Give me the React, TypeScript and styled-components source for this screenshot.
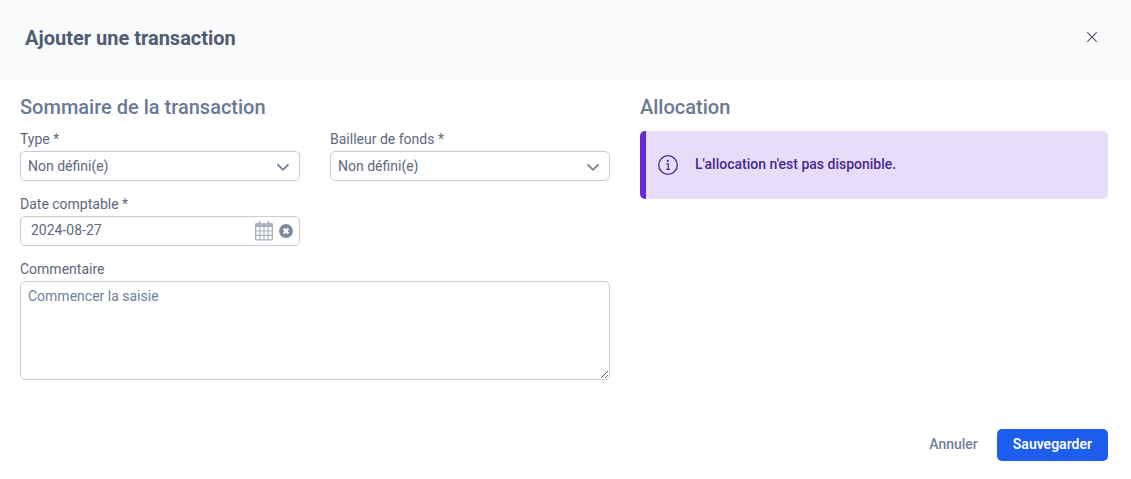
import React, { useState } from "react";
import styled, { createGlobalStyle, css } from "styled-components";

const color = {
  title: "#505d70",
  heading: "#6a7a92",
  text: "#5c697d",
  muted: "#71809a",
  border: "#cbccdb",
  band: "#f9fafc",
  primary: "#1d5eef",
  accent: "#6a29d9",
  accentSoft: "#e7ddf8",
  accentText: "#4a2892",
};

const GlobalStyle = createGlobalStyle`
  *, *::before, *::after { box-sizing: border-box; }
  body {
    margin: 0;
    background: #fff;
    color: ${color.text};
    font: 400 14px/20px Roboto, "Liberation Sans", sans-serif;
  }
  button, input, select, textarea { font: inherit; color: inherit; }
`;

const Dialog = styled.form`
  display: flex;
  flex-direction: column;
`;

const Header = styled.header`
  display: flex;
  align-items: center;
  justify-content: space-between;
  height: 80px;
  padding: 0 28px 4px 25px;
  background: ${color.band};
`;

const Title = styled.h1`
  margin: 0;
  font-size: 20px;
  line-height: 24px;
  font-weight: 700;
  color: ${color.title};
`;

const IconButton = styled.button`
  display: flex;
  align-items: center;
  justify-content: center;
  flex: none;
  padding: 0;
  border: 0;
  background: none;
  cursor: pointer;
`;

const CloseButton = styled(IconButton)`
  width: 22px;
  height: 24px;
  padding-bottom: 2px;
  color: #50535c;
`;

const Body = styled.div`
  display: grid;
  grid-template-columns: 295fr 234fr;
  gap: 30px;
  align-items: start;
  padding: 15px 23px 0 20px;
`;

const Section = styled.section`
  min-width: 0;
`;

const SectionTitle = styled.h2`
  margin: 0;
  font-size: 20px;
  line-height: 24px;
  font-weight: 500;
  color: ${color.heading};
`;

const Fields = styled.div`
  display: grid;
  grid-template-columns: 1fr 1fr;
  gap: 13px 30px;
  margin-top: 10px;
`;

const Field = styled.div<{ $wide?: boolean }>`
  display: flex;
  flex-direction: column;
  gap: 2px;
  min-width: 0;
  ${(p) => p.$wide && "grid-column: 1 / -1;"}
`;

const FirstColumnField = styled(Field)`
  grid-column: 1;
`;

const Label = styled.label`
  line-height: 20px;
`;

const controlFrame = css`
  border: 1px solid ${color.border};
  border-radius: 5px;
  background: #fff;
`;

const SelectBox = styled.div`
  position: relative;
  display: flex;
`;

const Select = styled.select`
  ${controlFrame}
  appearance: none;
  width: 100%;
  height: 30px;
  padding: 0 30px 0 7px;
`;

const Chevron = styled.svg`
  position: absolute;
  right: 10px;
  top: 12px;
  color: ${color.muted};
  pointer-events: none;
`;

const DateBox = styled.div`
  ${controlFrame}
  display: flex;
  align-items: center;
  gap: 6px;
  height: 30px;
  padding: 0 6px 0 10px;
`;

const DateInput = styled.input`
  flex: 1;
  min-width: 0;
  height: 28px;
  padding: 0 0 2px;
  border: 0;
  background: none;
`;

const Comment = styled.textarea`
  ${controlFrame}
  display: block;
  width: 100%;
  height: 99px;
  padding: 4px 7px;
  resize: vertical;
  &::placeholder {
    color: ${color.muted};
    opacity: 1;
  }
`;

const Notice = styled.div`
  display: flex;
  align-items: center;
  gap: 17px;
  min-height: 68px;
  margin-top: 12px;
  padding: 0 12px;
  border-left: 6px solid ${color.accent};
  border-radius: 5px;
  background: ${color.accentSoft};
  color: ${color.accentText};
  font-weight: 500;
`;

const NoticeText = styled.p`
  margin: 0;
  padding-bottom: 2px;
`;

const Footer = styled.footer`
  display: flex;
  justify-content: flex-end;
  gap: 3px;
  padding: 49px 23px 18px;
`;

const Button = styled.button<{ $primary?: boolean }>`
  height: 32px;
  padding: 0 16px 2px;
  border: 0;
  border-radius: 5px;
  background: ${(p) => (p.$primary ? color.primary : "transparent")};
  color: ${(p) => (p.$primary ? "#fff" : color.muted)};
  font-weight: ${(p) => (p.$primary ? 600 : 500)};
  cursor: pointer;
`;

const CloseIcon = () => (
  <svg width="10" height="10" viewBox="0 0 10 10" fill="none" stroke="currentColor" strokeWidth="1.1" aria-hidden="true">
    <path d="M0.2 0.2L9.8 9.8M9.8 0.2L0.2 9.8" />
  </svg>
);

const CalendarIcon = () => (
  <svg width="18" height="20" viewBox="0 0 18 20" fill="none" stroke="#a8b1bb" aria-hidden="true">
    <rect x="0.600" y="2.600" width="16.800" height="16.200" rx="1.200" strokeWidth="1.300" />
    <path d="M0.500 4.200h17" strokeWidth="3.600" />
    <path d="M4.500 0v4M13.500 0v4" strokeWidth="1.800" />
    <path d="M5 6v13M9 6v13M13 6v13M1 10h16M1 14.300h16" strokeWidth="1.200" />
  </svg>
);

const ClearIcon = () => (
  <svg width="14" height="14" viewBox="0 0 14 14" aria-hidden="true">
    <circle cx="7" cy="7" r="6.900" fill="#7b8a9f" />
    <path d="M4.600 4.600l4.800 4.800M9.400 4.600L4.600 9.400" stroke="#fff" strokeWidth="2.200" />
  </svg>
);

const InfoIcon = () => (
  <svg width="20" height="20" viewBox="0 0 20 20" fill="none" stroke="currentColor" aria-hidden="true">
    <circle cx="10" cy="10" r="9.300" strokeWidth="1.300" />
    <circle cx="9.800" cy="5.900" r="1.100" fill="currentColor" stroke="none" />
    <path d="M8.300 8.900h1.900v5.300M8.200 14.300h3.800" strokeWidth="1.200" />
  </svg>
);

function SelectField({ id, label }: { id: string; label: string }) {
  return (
    <Field>
      <Label htmlFor={id}>{label} *</Label>
      <SelectBox>
        <Select id={id} required>
          <option>Non défini(e)</option>
        </Select>
        <Chevron width="14" height="9" viewBox="0 0 14 9" fill="none" stroke="currentColor" strokeWidth="1.800" aria-hidden="true">
          <path d="M1.500 1.300L7 6.800l5.500-5.500" />
        </Chevron>
      </SelectBox>
    </Field>
  );
}

export default function App() {
  const [date, setDate] = useState("2024-08-27");

  return (
    <>
      <GlobalStyle />
      <Dialog onSubmit={(e) => e.preventDefault()}>
        <Header>
          <Title>Ajouter une transaction</Title>
          <CloseButton type="button" aria-label="Fermer">
            <CloseIcon />
          </CloseButton>
        </Header>
        <Body>
          <Section>
            <SectionTitle>Sommaire de la transaction</SectionTitle>
            <Fields>
              <SelectField id="type" label="Type" />
              <SelectField id="funder" label="Bailleur de fonds" />
              <FirstColumnField>
                <Label htmlFor="date">Date comptable *</Label>
                <DateBox>
                  <DateInput id="date" type="text" value={date} onChange={(e) => setDate(e.target.value)} />
                  <IconButton type="button" aria-label="Choisir une date">
                    <CalendarIcon />
                  </IconButton>
                  <IconButton type="button" aria-label="Effacer la date" onClick={() => setDate("")}>
                    <ClearIcon />
                  </IconButton>
                </DateBox>
              </FirstColumnField>
              <Field $wide>
                <Label htmlFor="comment">Commentaire</Label>
                <Comment id="comment" placeholder="Commencer la saisie" />
              </Field>
            </Fields>
          </Section>
          <Section>
            <SectionTitle>Allocation</SectionTitle>
            <Notice role="status">
              <InfoIcon />
              <NoticeText>L'allocation n'est pas disponible.</NoticeText>
            </Notice>
          </Section>
        </Body>
        <Footer>
          <Button type="button">Annuler</Button>
          <Button type="submit" $primary>
            Sauvegarder
          </Button>
        </Footer>
      </Dialog>
    </>
  );
}
